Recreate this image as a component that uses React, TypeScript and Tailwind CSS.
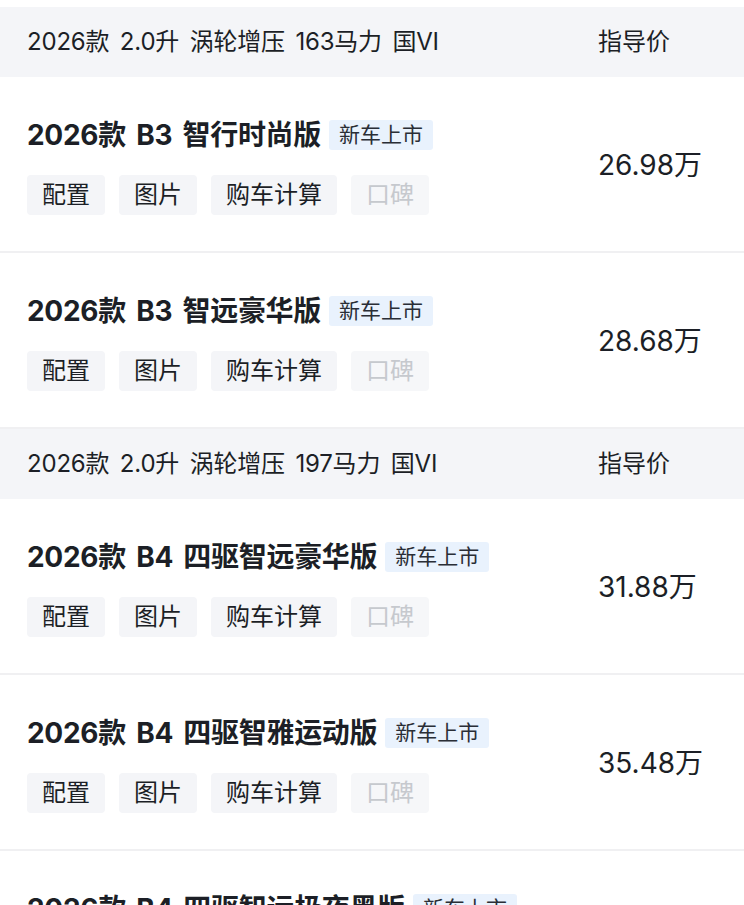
import React from "react";

type Car = { name: string; price: string };
type Group = { spec: string; cars: Car[] };

const groups: Group[] = [
  {
    spec: "2026款 2.0升 涡轮增压 163马力 国VI",
    cars: [
      { name: "2026款 B3 智行时尚版", price: "26.98万" },
      { name: "2026款 B3 智远豪华版", price: "28.68万" },
    ],
  },
  {
    spec: "2026款 2.0升 涡轮增压 197马力 国VI",
    cars: [
      { name: "2026款 B4 四驱智远豪华版", price: "31.88万" },
      { name: "2026款 B4 四驱智雅运动版", price: "35.48万" },
      { name: "2026款 B4 四驱智远极夜黑版", price: "37.98万" },
    ],
  },
];

const GroupHeader = ({ spec }: { spec: string }) => (
  <div className="flex h-[70px] items-center bg-[#f4f5f8] pl-[27px] text-[24px] text-[#1c1f26]">
    <span className="flex-1 tracking-[-0.2px] [word-spacing:4px]">{spec}</span>
    <span className="w-[146px]">指导价</span>
  </div>
);

const CarRow = ({ car }: { car: Car }) => (
  <div className="flex h-[176px] items-center border-b-2 border-[#f0f0f2] pl-[27px]">
    <div className="flex flex-1 flex-col gap-[25px] pt-[6px]">
      <div className="flex h-[30px] items-center gap-[8px]">
        <span className="text-[28px] font-bold tracking-[-0.3px] text-[#1c1f26] [word-spacing:4px]">
          {car.name}
        </span>
        <span className="flex h-[30px] items-center rounded-[3px] bg-[#e9f2fd] px-[10px] text-[21px] text-[#2a2e36]">
          新车上市
        </span>
      </div>
      <div className="flex gap-[14px]">
        {["配置", "图片", "购车计算"].map((t) => (
          <span
            key={t}
            className="flex h-[40px] items-center rounded-[4px] bg-[#f4f5f8] px-[15px] text-[24px] text-[#1c1f26]"
          >
            {t}
          </span>
        ))}
        <span className="flex h-[40px] items-center rounded-[4px] bg-[#f6f7f9] px-[15px] text-[24px] text-[#c6c9ce]">
          口碑
        </span>
      </div>
    </div>
    <div className="w-[146px] pt-[1px] text-[28px] text-[#1c1f26]">{car.price}</div>
  </div>
);

export default function App() {
  return (
    <div
      className="h-[905px] overflow-hidden bg-white pt-[7px]"
      style={{ fontFamily: '"Inter", "Noto Sans CJK SC", sans-serif' }}
    >
      {groups.map((g) => (
        <div key={g.spec}>
          <GroupHeader spec={g.spec} />
          {g.cars.map((c) => (
            <CarRow key={c.name} car={c} />
          ))}
        </div>
      ))}
    </div>
  );
}
